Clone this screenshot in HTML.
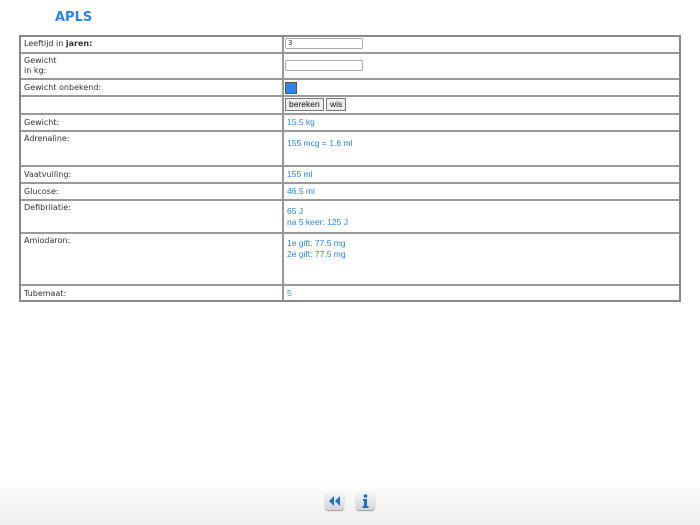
<html><head><style>
body{margin:0;width:700px;height:525px;background:#fff;position:relative;overflow:hidden;font-family:"DejaVu Sans",sans-serif;font-size:8px;color:#333}
h1{position:absolute;left:55px;top:10px;margin:0;font:bold 13px "DejaVu Sans",sans-serif;color:#2a86e8}
.t{position:absolute;left:19px;top:35px;width:662px;height:267px;border:2px solid #888;box-sizing:border-box}
.r{position:absolute;left:0;width:658px;border-top:2px solid #999}
.v{position:absolute;left:261px;top:0;bottom:0;border-left:2px solid #999}
.l{position:absolute;left:3px}
.rv{position:absolute;left:266px;color:#2a86e8;font-family:"Liberation Sans",sans-serif;font-size:8.5px;line-height:11px}
.in{position:absolute;left:264px;width:74px;height:9px;border:1px solid #aaa;border-radius:2px;font-size:7px;padding-left:2px;line-height:9px}
.btn{position:absolute;top:1px;height:11px;border:1px solid #777;background:#eee;font:8.5px "Liberation Sans",sans-serif;color:#111;line-height:11px;padding:0 3px}
.foot{position:absolute;left:0;top:480px;width:700px;height:45px;background:linear-gradient(#fff,#ededed)}
.ic{position:absolute;top:492px;width:19px;height:18px;border-radius:3px;background:linear-gradient(#f6f6f6,#d4d4d4);box-shadow:0 1px 1px #999}
</style></head><body>
<h1>APLS</h1>
<div class="t">
<div class="r" style="top:-2px;height:16px;border:0"><span class="l" style="top:4px">Leeftijd in <b>jaren:</b></span><div class="in" style="top:3px">3</div></div>
<div class="r" style="top:15px;height:25px"><span class="l" style="top:2px;line-height:10px">Gewicht<br>in kg:</span><div class="in" style="top:6px"></div></div>
<div class="r" style="top:41px"><span class="l" style="top:3px">Gewicht onbekend:</span><div style="position:absolute;left:264px;top:2px;width:10px;height:10px;background:#2a86e8;border:1px solid #555"></div></div>
<div class="r" style="top:58px"><div class="btn" style="left:264px">bereken</div><div class="btn" style="left:305px">wis</div></div>
<div class="r" style="top:76px"><span class="l" style="top:3px">Gewicht:</span><span class="rv" style="top:2px">15.5 kg</span></div>
<div class="r" style="top:93px"><span class="l" style="top:2px">Adrenaline:</span><span class="rv" style="top:6px">155 mcg = 1.6 ml</span></div>
<div class="r" style="top:128px"><span class="l" style="top:3px">Vaatvulling:</span><span class="rv" style="top:2px">155 ml</span></div>
<div class="r" style="top:145px"><span class="l" style="top:3px">Glucose:</span><span class="rv" style="top:2px">46.5 ml</span></div>
<div class="r" style="top:162px"><span class="l" style="top:2px">Defibrilatie:</span><span class="rv" style="top:5px">65 J<br>na 5 keer: 125 J</span></div>
<div class="r" style="top:195px"><span class="l" style="top:2px">Amiodaron:</span><span class="rv" style="top:4px">1e gift: 77.5 mg<br>2e gift: 77.5 mg</span></div>
<div class="r" style="top:247px"><span class="l" style="top:3px">Tubemaat:</span><span class="rv" style="top:2px">5</span></div>
<div class="v"></div>
</div>
<div class="foot"></div>
<div class="ic" style="left:325px"><svg width="19" height="18"><path d="M4 9l5-5v10zM10 9l5-5v10z" fill="#1f6fc8"/></svg></div>
<div class="ic" style="left:356px"><svg width="19" height="18"><circle cx="9.5" cy="4" r="1.8" fill="#1f6fc8"/><path d="M7 7h4v7h1.5v2h-6v-2H8V9H7z" fill="#1f6fc8"/></svg></div>
</body></html>
